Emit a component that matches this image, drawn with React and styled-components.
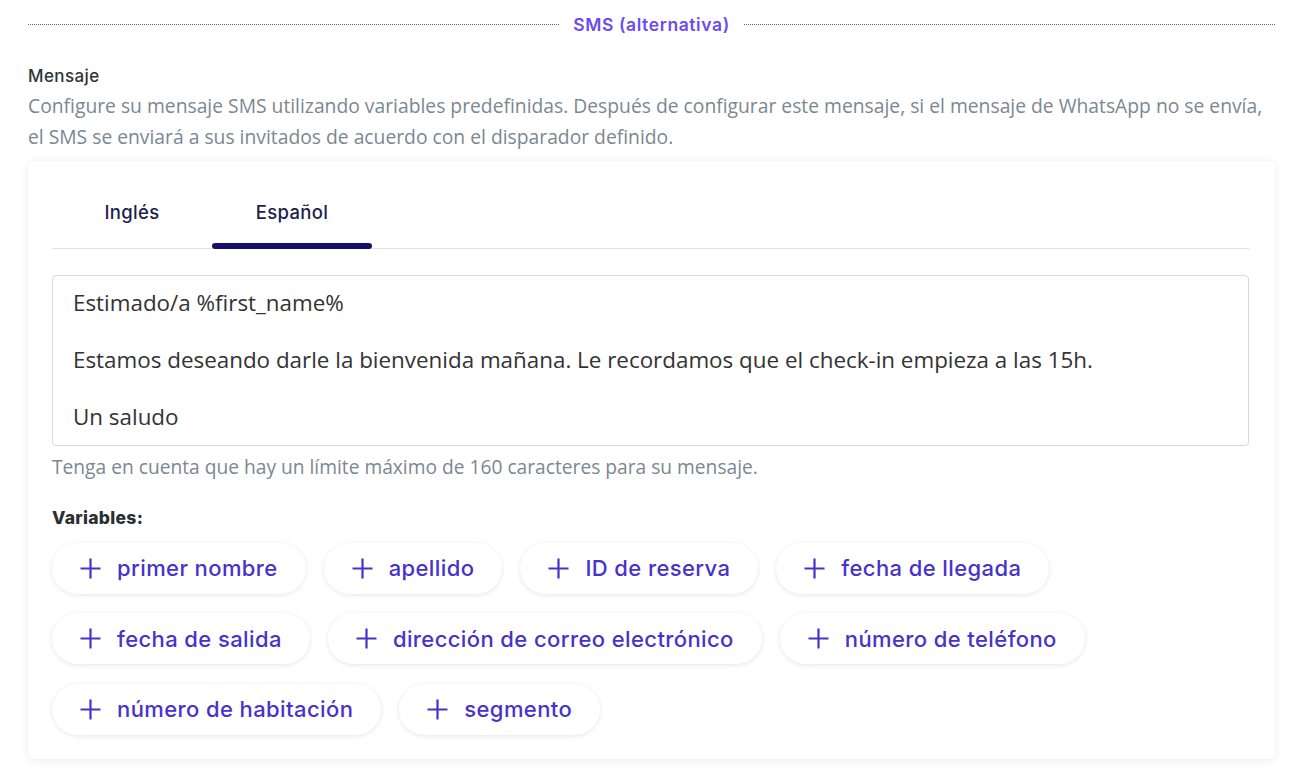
import styled, {createGlobalStyle} from "styled-components";

const GlobalStyle = createGlobalStyle`
  body {
    margin: 0;
    background: #ffffff;
    font-family: "Open Sans", "Noto Sans", sans-serif;
  }
`;

const VARIABLES = [
  "primer nombre",
  "apellido",
  "ID de reserva",
  "fecha de llegada",
  "fecha de salida",
  "dirección de correo electrónico",
  "número de teléfono",
  "número de habitación",
  "segmento",
];

const Page = styled.div`
  padding: 12px 25px 20px 28px;
`;

const SectionTitle = styled.div`
  display: flex;
  align-items: center;
  gap: 14px;
  height: 24px;

  &::before,
  &::after {
    content: "";
    flex: 1;
    border-top: 1px dotted #6b4cf0;
  }
`;

const SectionLabel = styled.span`
  font-family: "Inter", sans-serif;
  font-size: 17.5px;
  font-weight: 600;
  letter-spacing: 0.6px;
  color: #6b4cf0;
`;

const Label = styled.div`
  margin-top: 28px;
  font-family: "Inter", sans-serif;
  font-size: 17px;
  font-weight: 500;
  letter-spacing: 0.4px;
  color: #2f3438;
  line-height: 24px;
`;

const Description = styled.p`
  margin: 2px 0 0;
  font-size: 19.3px;
  line-height: 31px;
  color: #7b8791;
`;

const Card = styled.section`
  margin-top: 9px;
  background: #fff;
  border-radius: 6px;
  box-shadow: 0 1px 8px rgba(0, 0, 0, 0.09);
  padding: 14px 26px 24px 24px;
`;

const Tabs = styled.nav`
  display: flex;
  border-bottom: 1px solid #e0e2e6;
`;

const Tab = styled.button`
  position: relative;
  width: 160px;
  height: 73px;
  border: none;
  background: none;
  padding: 0;
  font-family: "Inter", sans-serif;
  font-size: 18.5px;
  font-weight: 500;
  letter-spacing: 0.3px;
  color: #1d1f4a;
  cursor: pointer;

  &::after {
    content: "";
    position: absolute;
    left: 0;
    right: 0;
    bottom: -1px;
    height: 6px;
    border-radius: 3px;
    background: ${(p) => (p.$active ? "#160f6e" : "transparent")};
  }
`;

const Message = styled.div`
  margin-top: 26px;
  border: 1px solid #d6d9dd;
  border-radius: 4px;
  padding: 13px 20px;
  font-size: 22.4px;
  line-height: 28.5px;
  color: #333333;
  white-space: pre-wrap;
`;

const Hint = styled.p`
  margin: 9px 0 0;
  font-size: 19.2px;
  line-height: 24px;
  color: #7b8791;
`;

const VarTitle = styled.div`
  margin-top: 27px;
  font-family: "Inter", sans-serif;
  font-size: 17.5px;
  font-weight: 800;
  letter-spacing: 0.3px;
  line-height: 24px;
  color: #2b2f33;
`;

const Chips = styled.div`
  display: flex;
  flex-wrap: wrap;
  gap: 19.5px 18px;
  margin-top: 13px;
  max-width: 1060px;
`;

const Chip = styled.button`
  display: flex;
  align-items: center;
  gap: 16px;
  height: 51px;
  padding: 0 28px;
  border: none;
  border-radius: 26px;
  background: #fff;
  box-shadow: 0 1px 5px rgba(0, 0, 0, 0.1);
  font-family: "Inter", sans-serif;
  font-size: 22px;
  font-weight: 500;
  letter-spacing: 0.4px;
  color: #4733c9;
  cursor: pointer;
`;

function PlusIcon() {
  return (
    <svg width="21" height="21" viewBox="0 0 21 21" fill="none">
      <path d="M10.5 0.5v20M0.5 10.5h20" stroke="#4733c9" strokeWidth="2.2" />
    </svg>
  );
}

const TEXT = `Estimado/a %first_name%

Estamos deseando darle la bienvenida mañana. Le recordamos que el check-in empieza a las 15h.

Un saludo`;

function App() {
  return (
    <>
      <GlobalStyle />
      <Page>
        <SectionTitle>
          <SectionLabel>SMS (alternativa)</SectionLabel>
        </SectionTitle>
        <Label>Mensaje</Label>
        <Description>
          Configure su mensaje SMS utilizando variables predefinidas. Después de
          configurar este mensaje, si el mensaje de WhatsApp no se envía, el SMS
          se enviará a sus invitados de acuerdo con el disparador definido.
        </Description>
        <Card>
          <Tabs>
            <Tab>Inglés</Tab>
            <Tab $active>Español</Tab>
          </Tabs>
          <Message>{TEXT}</Message>
          <Hint>
            Tenga en cuenta que hay un límite máximo de 160 caracteres para su
            mensaje.
          </Hint>
          <VarTitle>Variables:</VarTitle>
          <Chips>
            {VARIABLES.map((v) => (
              <Chip key={v}>
                <PlusIcon />
                {v}
              </Chip>
            ))}
          </Chips>
        </Card>
      </Page>
    </>
  );
}

export default App;
